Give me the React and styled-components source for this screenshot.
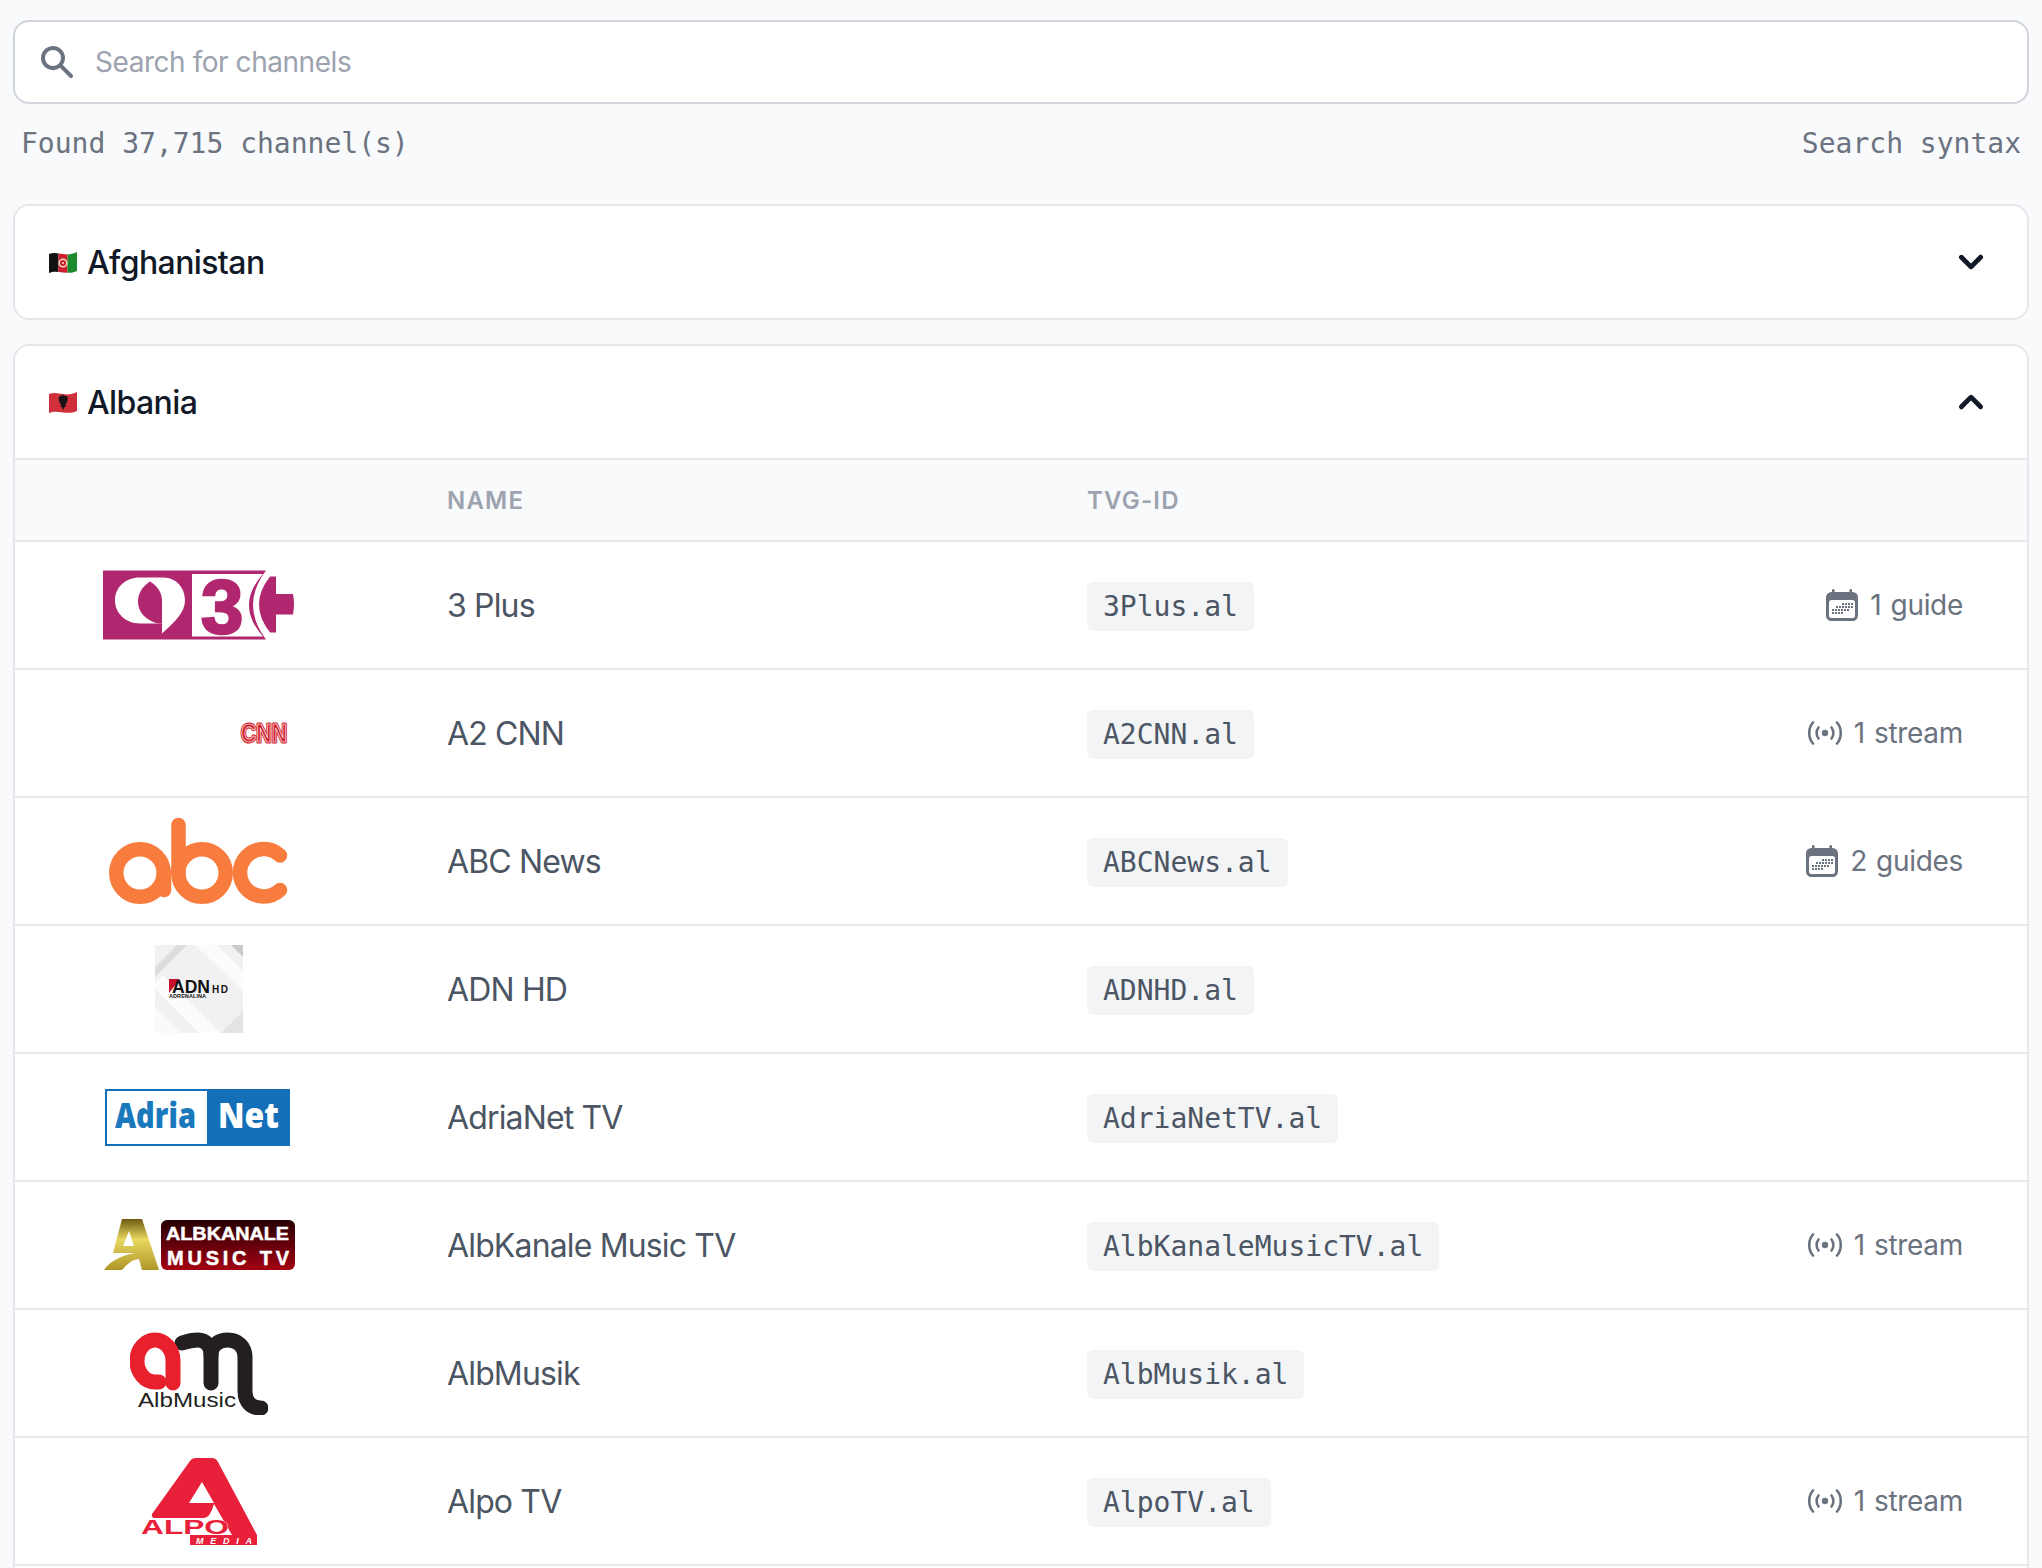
import React from 'react'
import styled, { createGlobalStyle } from 'styled-components'

const GlobalStyle = createGlobalStyle`
  html, body {
    margin: 0;
    background: #f9fafb;
  }
  * {
    box-sizing: border-box;
  }
`

const Page = styled.div`
  height: 1568px;
  overflow: hidden;
  padding: 20px 13px 0;
  font-family: Inter, 'Liberation Sans', sans-serif;
`

const SearchBox = styled.label`
  display: flex;
  align-items: center;
  gap: 18px;
  height: 84px;
  padding: 0 36px 0 22px;
  background: #fff;
  border: 2px solid #d1d5db;
  border-radius: 16px;
  color: #6b7280;
`

const SearchInput = styled.input`
  flex: 1;
  border: none;
  outline: none;
  background: none;
  padding: 0;
  font: 28px Inter, 'Liberation Sans', sans-serif;
  letter-spacing: -0.45px;
  color: #111827;

  &::placeholder {
    color: #9ca3af;
    opacity: 1;
  }
`

const MetaRow = styled.div`
  display: flex;
  justify-content: space-between;
  align-items: center;
  height: 40px;
  margin: 20px 0 40px;
  padding: 0 8px;
  font: 28px/40px 'DejaVu Sans Mono', monospace;
  color: #6b7280;
`

const Panel = styled.section`
  background: #fff;
  border: 2px solid #e5e7eb;
  border-radius: ${props => props.open ? '16px 16px 0 0' : '16px'};
  margin-bottom: 24px;
  padding-bottom: ${props => props.open ? '40px' : '0'};
`

const PanelHead = styled.div`
  display: flex;
  align-items: center;
  gap: 10px;
  height: 112px;
  padding: 0 32px 0 34px;
  font-size: 32px;
  font-weight: 500;
  letter-spacing: -0.6px;
  color: #111827;
  border-bottom: ${props => props.open ? '2px solid #e5e7eb' : 'none'};
  box-sizing: ${props => props.open ? 'content-box' : 'border-box'};
`

const Chevron = styled.svg`
  margin-left: auto;
  width: 48px;
  height: 48px;
  fill: #111827;
  transform: ${props => props.open ? 'rotate(180deg)' : 'none'};
`

const Row = styled.div`
  display: grid;
  grid-template-columns: 432px 640px 1fr auto;
  align-items: center;
  height: 128px;
  padding-right: 64px;
  border-bottom: 2px solid #e5e7eb;
`

const HeadRow = styled(Row)`
  height: 82px;
  background: #f9fafb;
  font-size: 24px;
  font-weight: 600;
  letter-spacing: 0.05em;
  text-transform: uppercase;
  color: #9ca3af;
`

const LogoCell = styled.div`
  display: flex;
  align-items: center;
  justify-content: center;
  width: 368px;
  height: 88px;
`

const Name = styled.div`
  font-size: 32px;
  letter-spacing: -0.85px;
  color: #4b5563;
`

const IdCell = styled.div`
  padding-top: 3px;
`

const Code = styled.code`
  display: inline-block;
  padding: 5px 16px 4px;
  border-radius: 6px;
  background: #f3f4f6;
  font: 28px/40px 'DejaVu Sans Mono', monospace;
  color: #4b5563;
`

const Status = styled.div`
  display: flex;
  align-items: center;
  gap: 12px;
  font-size: 28px;
  letter-spacing: -0.3px;
  word-spacing: 1.5px;
  color: #6b7280;
`

const SearchIcon = () => (
  <svg width='40' height='40' viewBox='0 0 20 20' fill='currentColor'>
    <path fillRule='evenodd' clipRule='evenodd' d='M8 4a4 4 0 100 8 4 4 0 000-8zM2 8a6 6 0 1110.89 3.476l4.817 4.817a1 1 0 01-1.414 1.414l-4.816-4.816A6 6 0 012 8z' />
  </svg>
)

const ChevronIcon = ({ open }) => (
  <Chevron open={open} viewBox='0 0 20 20'>
    <path fillRule='evenodd' clipRule='evenodd' d='M5.293 7.293a1 1 0 011.414 0L10 10.586l3.293-3.293a1 1 0 111.414 1.414l-4 4a1 1 0 01-1.414 0l-4-4a1 1 0 010-1.414z' />
  </Chevron>
)

const wave = 'M0 2 C6 0 10 2 14 2 C19 3 24 2 28 0 V19 C24 21 19 21 14 20.5 C9 20 5 19 0 21 Z'

const AfghanFlag = () => (
  <svg width='28' height='21' viewBox='0 0 28 21'>
    <clipPath id='afClip'><path d={wave} /></clipPath>
    <g clipPath='url(#afClip)'>
      <rect width='9.5' height='21' fill='#111' />
      <rect x='9.5' width='9' height='21' fill='#cf1f2e' />
      <rect x='18.5' width='9.5' height='21' fill='#1c8a2e' />
      <circle cx='14' cy='11' r='3.8' fill='none' stroke='#f0dcc0' strokeWidth='1.5' />
      <circle cx='14' cy='11' r='1.1' fill='#f0dcc0' />
    </g>
  </svg>
)

const AlbanianFlag = () => (
  <svg width='28' height='21' viewBox='0 0 28 21'>
    <path d={wave} fill='#d0303c' />
    <path d='M13.2 3.5 L14.2 2.6 L15 4 L17 3.8 L18.8 5.5 L18.6 8.5 L17.6 11 L16.4 12.4 L16.8 14.6 L15.2 15.6 L14.2 18.4 L13.2 15.6 L11.6 14.6 L12 12.4 L10.8 11 L9.8 8.5 L9.6 5.5 L11.4 3.8 Z' fill='#1a1216' />
  </svg>
)

const CalendarIcon = () => (
  <svg width='32' height='32' viewBox='0 0 32 32'>
    <rect x='6' width='2.6' height='6' rx='1.3' fill='#6b7280' />
    <rect x='23.4' width='2.6' height='6' rx='1.3' fill='#6b7280' />
    <rect y='3' width='32' height='29' rx='5.5' fill='#6b7280' />
    <rect x='3' y='11' width='26' height='18' rx='2.5' fill='#fff' />
    <g fill='#6b7280'>
      {[
        [17, 14], [20, 14], [23, 14], [26, 14],
        [11, 17], [14, 17], [17, 17], [20, 17], [23, 17], [26, 17],
        [7, 20], [10, 20], [13, 20], [16, 20], [19, 20], [22, 20],
        [7, 23], [10, 23], [13, 23], [16, 23]
      ].map(([x, y]) => <rect key={`${x}-${y}`} x={x - 1} y={y} width='2' height='2' />)}
    </g>
  </svg>
)

const StreamIcon = () => (
  <svg width='34' height='24' viewBox='0 0 34 24' fill='none' stroke='#6b7280' strokeWidth='2.6' strokeLinecap='round'>
    <circle cx='17' cy='12' r='3.2' fill='#6b7280' stroke='none' />
    <path d='M10.5 6.5 C8 9.5 8 14.5 10.5 17.5' />
    <path d='M23.5 6.5 C26 9.5 26 14.5 23.5 17.5' />
    <path d='M5 1.5 C0 7 0 17 5 22.5' />
    <path d='M29 1.5 C34 7 34 17 29 22.5' />
  </svg>
)

const ThreePlusLogo = () => (
  <svg width='192' height='90' viewBox='0 -10.5 192 90'>
    <path d='M0 0 H163 Q137 34.5 163 69 H0 Z' fill='#b0276f' />
    <path d='M89 3.5 H160 Q132 34.5 160 66 H89 Z' fill='#fff' />
    <path d='M167 6 H173 V23.5 H190 Q192 33 190 44 H173 V62 H167 Q145 34 167 6 Z' fill='#b0276f' />
    <path d='M37 7 H60 C74 7 82 18 82 30 C82 42 72 51 59 63 V53 H37 C22 53 12 42 12 30 C12 17 22 7 37 7 Z' fill='#fff' />
    <path d='M47 11 C38 17 35 24 35 31 C35 42 43 50 55 53 H59 V30 C59 22 54 15 47 11 Z' fill='#b0276f' />
    <text x='98' y='62' fontFamily='Liberation Sans' fontWeight='700' fontSize='76' fill='#b0276f' stroke='#b0276f' strokeWidth='2.5'>3</text>
  </svg>
)

// the source image has blank space left of the letters
const CnnLogo = () => (
  <svg width='192' height='30' viewBox='0 -4 192 30' fontFamily='Liberation Sans' fontWeight='700' fontSize='26'>
    <defs>
      <text id='cnnWord' x='138' y='20' textLength='46' lengthAdjust='spacingAndGlyphs'>CNN</text>
    </defs>
    <use href='#cnnWord' fill='#d3242f' stroke='#d3242f' strokeWidth='3' strokeLinejoin='round' />
    <use href='#cnnWord' fill='#d3242f' stroke='#fff' strokeWidth='0.7' strokeLinejoin='round' />
  </svg>
)

const AbcLogo = () => (
  <svg width='180' height='88' viewBox='0 0 180 88' fill='none' stroke='#f87c3d' strokeWidth='14.5' strokeLinecap='round'>
    <circle cx='31' cy='56' r='23.7' />
    <path d='M55 56 V73' />
    <circle cx='93' cy='56' r='23.7' />
    <path d='M69.5 56 V8' />
    <path d='M171 39 A23.7 23.7 0 1 0 171 73.5' transform='translate(0 -0.5)' />
  </svg>
)

const AdnLogo = () => (
  <svg width='88' height='88' viewBox='0 0 88 88'>
    <rect width='88' height='88' fill='#f1f1f2' />
    <path d='M0 22 L22 0 H32 L0 32 Z' fill='#dcdddf' />
    <path d='M40 0 H62 L88 26 V46 Z' fill='#fbfbfb' />
    <path d='M0 62 L26 88 H0 Z' fill='#fafafa' />
    <path d='M8 30 L66 88 H44 L0 44 V38 Z' fill='#fbfbfb' />
    <path d='M66 88 L88 66 V88 Z' fill='#e2e3e4' />
    <path d='M76 0 H88 V12 Z' fill='#c9cacc' />
    <path d='M14 34 H25 L14 48 Z' fill='#c8102e' />
    <text x='17' y='48' fontFamily='Liberation Sans' fontWeight='700' fontSize='19' fill='#111' textLength='38' lengthAdjust='spacingAndGlyphs'>ADN</text>
    <text x='57' y='48' fontFamily='Liberation Sans' fontWeight='700' fontSize='10' fill='#111' textLength='16'>HD</text>
    <text x='14' y='53' fontFamily='Liberation Sans' fontWeight='700' fontSize='5.5' fill='#111' textLength='37'>ADRENALINA</text>
  </svg>
)

const AdriaNetLogo = () => (
  <svg width='189' height='57' viewBox='0 0 189 57' fontFamily='Open Sans' fontWeight='800' fontSize='36'>
    <rect width='185' height='57' fill='#156fb8' />
    <rect x='2' y='2' width='100' height='53' fill='#fff' />
    <text x='10' y='39' fill='#1a78bd' textLength='81' lengthAdjust='spacingAndGlyphs'>Adria</text>
    <text x='113' y='39' fill='#fff' textLength='61' lengthAdjust='spacingAndGlyphs'>Net</text>
  </svg>
)

const AlbKanaleLogo = () => (
  <svg width='191' height='52' viewBox='0 0 191 52' fontFamily='Liberation Sans' fontWeight='700' fill='#fff' stroke='#fff' strokeWidth='0.5'>
    <defs>
      <linearGradient id='gold' x1='0' y1='0' x2='0' y2='1'>
        <stop offset='0' stopColor='#6e5a10' />
        <stop offset='0.4' stopColor='#e8d860' />
        <stop offset='1' stopColor='#b0962a' />
      </linearGradient>
      <linearGradient id='maroon' x1='0' y1='0' x2='0' y2='1'>
        <stop offset='0' stopColor='#250003' />
        <stop offset='1' stopColor='#a30011' />
      </linearGradient>
    </defs>
    <path fillRule='evenodd' stroke='none' d='M18 0 H38 L55 51 H38 L35 40 C26 41 22 47 18 51 H0 C6 42 18 36 31 34 H9 Z M25 12 L19 27 H30 Z' fill='url(#gold)' />
    <rect x='57' y='1' width='134' height='50' rx='6' stroke='none' fill='url(#maroon)' />
    <text x='62' y='21' fontSize='19' textLength='123' lengthAdjust='spacingAndGlyphs'>ALBKANALE</text>
    <text x='63' y='46' fontSize='20' textLength='122'>MUSIC TV</text>
  </svg>
)

const AlbMusicLogo = () => (
  <svg width='138' height='84' viewBox='0 -2 138 84'>
    <g fill='none' strokeWidth='15' strokeLinecap='round'>
      <path d='M52 10 C58 8 63 7 68 7 C76 7 81 13 81 22 V50' stroke='#231f20' />
      <path d='M81 22 C81 13 88 7 98 7 C108 7 115 14 115 24 V58 C115 70 122 75 131 75' stroke='#231f20' />
      <path d='M29 49 H25 A18 21 0 1 1 43 28 V50' stroke='#e8202e' />
    </g>
    <text x='8' y='74' fontFamily='Liberation Sans' fontSize='21' fill='#231f20' textLength='98' lengthAdjust='spacingAndGlyphs'>AlbMusic</text>
  </svg>
)

const AlpoLogo = () => (
  <svg width='115' height='87' viewBox='0 0 115 87' fontFamily='Liberation Sans' fontWeight='700'>
    <path fillRule='evenodd' d='M48 3 Q50 0 54 0 H70 Q74 0 76 4 L115 77 H90 L72 46 Q68 60 62 60 H12 Q9 59 10 56 Z M60 24 L47 45 H72 Z' fill='#e8203a' />
    <text x='-1' y='76' fontSize='20' fill='#e8203a' stroke='#fff' strokeWidth='0.6' paintOrder='stroke' textLength='88' lengthAdjust='spacingAndGlyphs'>ALPO</text>
    <rect x='48' y='77' width='67' height='10' fill='#e8203a' />
    <text x='54' y='85.5' fontSize='9' fontStyle='italic' fill='#fff' textLength='56'>MEDIA</text>
  </svg>
)

const channels = [
  { name: '3 Plus', id: '3Plus.al', logo: <ThreePlusLogo />, kind: 'guide', label: '1 guide' },
  { name: 'A2 CNN', id: 'A2CNN.al', logo: <CnnLogo />, kind: 'stream', label: '1 stream' },
  { name: 'ABC News', id: 'ABCNews.al', logo: <AbcLogo />, kind: 'guide', label: '2 guides' },
  { name: 'ADN HD', id: 'ADNHD.al', logo: <AdnLogo /> },
  { name: 'AdriaNet TV', id: 'AdriaNetTV.al', logo: <AdriaNetLogo /> },
  { name: 'AlbKanale Music TV', id: 'AlbKanaleMusicTV.al', logo: <AlbKanaleLogo />, kind: 'stream', label: '1 stream' },
  { name: 'AlbMusik', id: 'AlbMusik.al', logo: <AlbMusicLogo /> },
  { name: 'Alpo TV', id: 'AlpoTV.al', logo: <AlpoLogo />, kind: 'stream', label: '1 stream' }
]

const App = () => (
  <Page>
    <GlobalStyle />
    <SearchBox>
      <SearchIcon />
      <SearchInput placeholder='Search for channels' />
    </SearchBox>
    <MetaRow>
      <span>Found 37,715 channel(s)</span>
      <span>Search syntax</span>
    </MetaRow>
    <Panel>
      <PanelHead>
        <AfghanFlag />
        Afghanistan
        <ChevronIcon />
      </PanelHead>
    </Panel>
    <Panel open>
      <PanelHead open>
        <AlbanianFlag />
        Albania
        <ChevronIcon open />
      </PanelHead>
      <HeadRow>
        <span />
        <span>Name</span>
        <span>TVG-ID</span>
      </HeadRow>
      {channels.map(c =>
        <Row key={c.id}>
          <LogoCell>{c.logo}</LogoCell>
          <Name>{c.name}</Name>
          <IdCell><Code>{c.id}</Code></IdCell>
          {c.kind && <Status>
            {c.kind === 'guide' ? <CalendarIcon /> : <StreamIcon />}
            {c.label}
          </Status>}
        </Row>
      )}
    </Panel>
  </Page>
)

export default App
